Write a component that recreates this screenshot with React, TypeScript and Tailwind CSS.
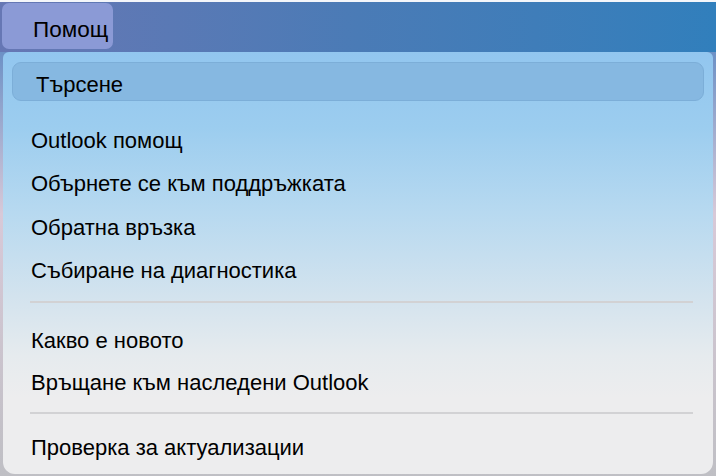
import React from "react";

const groups = [
  ["Outlook помощ", "Обърнете се към поддръжката", "Обратна връзка", "Събиране на диагностика"],
  ["Какво е новото", "Връщане към наследени Outlook"],
  ["Проверка за актуализации"],
];

const App: React.FC = () => {
  return (
    <div className="w-[716px] h-[476px] overflow-hidden flex flex-col bg-[linear-gradient(to_bottom,#4a7fc0_0%,#d8c9d8_45%,#bfbfc4_100%)] font-['Liberation_Sans',Arial,sans-serif] text-black">
      {/* Menu bar */}
      <div className="h-[52px] shrink-0 border-t-2 border-[#f4f6fa] bg-gradient-to-r from-[#6677b4] via-[#4a7bb6] to-[#317fbc] flex items-start pl-[2px] pt-[1px]">
        <div className="h-[46px] w-[111px] rounded-[7px] bg-[#8b9ad6] flex items-center pl-[31px] pt-[8px] text-[22.5px] leading-none">
          Помощ
        </div>
      </div>

      {/* Dropdown */}
      <div className="mx-[3px] h-[422px] rounded-b-[12px] rounded-t-[6px] bg-[linear-gradient(to_bottom,#92c6ef_0%,#9ccdef_18%,#b7d9f0_38%,#d3e3ee_58%,#e6ebee_72%,#ededee_82%,#ededee_100%)] flex flex-col">
        <div className="mx-[9px] mt-[10px] h-[39px] rounded-[9px] bg-[#86b8e1] border border-[#7caed8] flex items-center pl-[23px] pt-[7px] text-[22px] leading-none">
          Търсене
        </div>

        <div className="mt-[18px] flex flex-col">
          {groups.map((items, gi) => (
            <div key={gi} className="flex flex-col">
              {gi > 0 && (
                <div
                  className={
                    gi === 1
                      ? "ml-[27px] mr-[20px] mt-[8px] mb-[17px] h-[2px] bg-[#d2d2d4]"
                      : "ml-[27px] mr-[20px] mt-[8px] mb-[13px] h-[2px] bg-[#d2d2d4]"
                  }
                />
              )}
              {items.map((label) => (
                <div
                  key={label}
                  className={
                    gi === 0
                      ? "h-[43.5px] flex items-center pl-[28px] text-[22px] leading-none"
                      : "h-[42px] flex items-center pl-[28px] text-[22px] leading-none"
                  }
                >
                  {label}
                </div>
              ))}
            </div>
          ))}
        </div>
      </div>
    </div>
  );
};

export default App;
